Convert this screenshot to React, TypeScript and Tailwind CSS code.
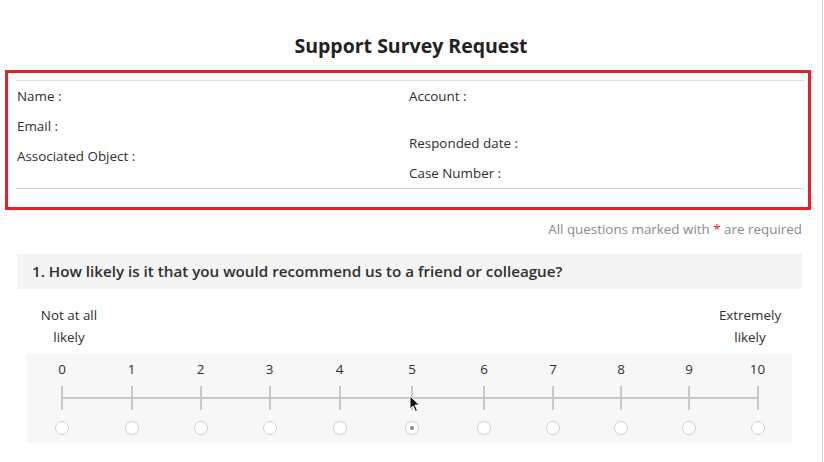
import React from 'react'

const scale = [0, 1, 2, 3, 4, 5, 6, 7, 8, 9, 10]

export default function App() {
  return (
    <div className="w-[824px] h-[462px] bg-white overflow-hidden font-['Open_Sans',sans-serif] text-[#2e2e2e]">
      <div className="relative w-[823px] h-[462px] border-r border-[#d4d4d4]">
        {/* Title */}
        <h1 className="pt-[34px] text-center text-[19.5px] leading-[24px] font-bold text-[#222]">
          Support Survey Request
        </h1>

        {/* Respondent details */}
        <div className="mt-[12px] ml-[5px] w-[806px] border-[3px] border-[#e8202a]">
          <div className="ml-[8px] mr-[4px] pt-[7px] pb-[18px]">
            <div className="h-[1px] bg-[#dcdcdc]" />
            <div className="flex text-[13.4px]">
              <div className="w-[393px] pl-px">
                <div className="h-[30px] flex items-center">Name :</div>
                <div className="h-[30px] flex items-center">Email :</div>
                <div className="h-[30px] flex items-center">Associated Object :</div>
              </div>
              <div className="flex-1">
                <div className="h-[30px] flex items-center">Account :</div>
                <div className="h-[30px] mt-[17px] flex items-center">Responded date :</div>
                <div className="h-[30px] flex items-center">Case Number :</div>
              </div>
            </div>
            <div className="h-[1px] bg-[#cfcfcf]" />
          </div>
        </div>

        <p className="mt-[11px] pr-[20px] text-right text-[13.4px] leading-[16px] text-[#8a8a8a]">
          All questions marked with <span className="text-[#e8202a]">*</span> are required
        </p>

        {/* Question */}
        <div className="mt-[17px] ml-[17px] mr-[20px] h-[35px] bg-[#f4f4f4] flex items-center pl-[15px]">
          <h2 className="text-[15.2px] font-semibold text-[#2e2e2e]">
            1. How likely is it that you would recommend us to a friend or colleague?
          </h2>
        </div>

        <div className="mt-[15px] flex justify-between pl-[29px] pr-[32px] text-[13.4px] leading-[22px] text-center">
          <div className="w-[80px]">Not at all<br />likely</div>
          <div className="w-[80px]">Extremely<br />likely</div>
        </div>

        <div className="relative mt-[5px] ml-[27px] w-[765px] h-[90px] bg-[#f7f7f7]">
          <div className="absolute left-[36px] right-[35px] top-[44px] h-[2px] bg-[#c8c8c8]" />
          <div className="grid grid-cols-[70px_69px_69px_69px_71px_74px_70px_68px_68px_68px_69px] pt-[8px]">
            {scale.map((n) => (
              <div key={n} className="flex flex-col items-center">
                <span className="h-[16px] text-[13.4px] leading-[16px] text-[#2e2e2e]">{n}</span>
                <div className="mt-[9px] w-[2px] h-[24px] bg-[#c8c8c8]" />
                <div className="mt-[11px] w-[14px] h-[14px] rounded-full border border-[#cfcfcf] bg-white flex items-center justify-center">
                  {n === 5 && <div className="w-[4px] h-[4px] rounded-full bg-[#888]" />}
                </div>
              </div>
            ))}
          </div>
        </div>

        {/* Mouse pointer */}
        <svg className="absolute left-[409px] top-[395px]" width="12" height="18" viewBox="0 0 12 18">
          <path d="M1 1 L1 14 L4 11 L6.5 16.5 L8.5 15.5 L6 10 L10.5 10 Z" fill="#111" stroke="#fff" strokeWidth="1" />
        </svg>
      </div>
    </div>
  )
}
